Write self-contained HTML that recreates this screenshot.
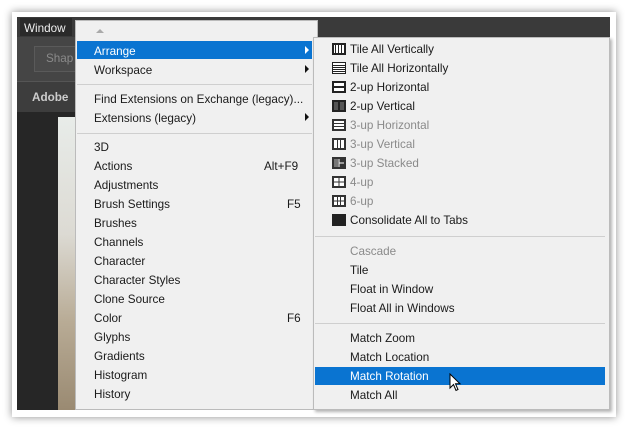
<!DOCTYPE html>
<html><head><style>
body{margin:0;width:625px;height:427px;background:#fff;position:relative;overflow:hidden;font-family:"Liberation Sans",sans-serif;font-size:11.7px;}
.a{position:absolute;}
.t{position:absolute;white-space:nowrap;color:#1a1a1a;line-height:19px;height:19px;margin-top:1px;}
.g{color:#8a8a8a;}
.sep{position:absolute;height:1px;background:#cfcfcf;}
svg.i{position:absolute;left:332px;shape-rendering:crispEdges;}
</style></head><body>
<div class="a" style="left:12px;top:12px;width:604px;height:405px;box-shadow:0 0 8px rgba(0,0,0,.45);"></div>
<div class="a" style="left:17px;top:17px;width:593px;height:393px;background:#262626;"></div>
<div class="a" style="left:17px;top:17px;width:593px;height:20px;background:#3a3a3a;"></div>
<div class="a" style="left:20px;top:18px;width:52px;height:18px;background:#2a2a2a;"></div>
<div class="t" style="left:24px;top:18px;color:#eee;">Window</div>
<div class="a" style="left:17px;top:37px;width:58px;height:44px;background:#454545;"></div>
<div class="a" style="left:34px;top:46px;width:45px;height:24px;border:1px solid #5a5a5a;background:#4a4a4a;"></div>
<div class="t" style="left:46px;top:48px;color:#8a8a8a;">Shap</div>
<div class="a" style="left:17px;top:81px;width:58px;height:30px;background:#3d3d3d;border-top:1px solid #555;"></div>
<div class="t" style="left:32px;top:87px;color:#ccc;font-weight:bold;">Adobe</div>
<div class="a" style="left:58px;top:117px;width:17px;height:293px;background:linear-gradient(#e8ece9,#dcdad3 40%,#b8ab95 70%,#9a8a72);"></div>
<div class="a" style="left:75px;top:20px;width:243px;height:390px;background:#f0f0f0;border:1px solid #bbb;box-sizing:border-box;"></div>
<div class="a" style="left:96px;top:29px;width:0;height:0;border-left:4px solid transparent;border-right:4px solid transparent;border-bottom:4px solid #aaa;"></div>
<div class="a" style="left:77px;top:41px;width:235px;height:18px;background:#0a74d1;"></div>
<div class="t" style="left:94px;top:41px;color:#fff;">Arrange</div>
<div class="a" style="left:305px;top:46px;border-top:4px solid transparent;border-bottom:4px solid transparent;border-left:4px solid #fff;"></div>
<div class="t" style="left:94px;top:60px;">Workspace</div>
<div class="a" style="left:305px;top:65px;border-top:4px solid transparent;border-bottom:4px solid transparent;border-left:4px solid #111;"></div>
<div class="sep" style="left:77px;top:84px;width:235px;"></div>
<div class="t" style="left:94px;top:89px;">Find Extensions on Exchange (legacy)...</div>
<div class="t" style="left:94px;top:108px;">Extensions (legacy)</div>
<div class="a" style="left:305px;top:113px;border-top:4px solid transparent;border-bottom:4px solid transparent;border-left:4px solid #111;"></div>
<div class="sep" style="left:77px;top:133px;width:235px;"></div>
<div class="t" style="left:94px;top:137px;">3D</div>
<div class="t" style="left:94px;top:156px;">Actions</div><div class="t" style="left:264px;top:156px;">Alt+F9</div>
<div class="t" style="left:94px;top:175px;">Adjustments</div>
<div class="t" style="left:94px;top:194px;">Brush Settings</div><div class="t" style="left:287px;top:194px;">F5</div>
<div class="t" style="left:94px;top:213px;">Brushes</div>
<div class="t" style="left:94px;top:232px;">Channels</div>
<div class="t" style="left:94px;top:251px;">Character</div>
<div class="t" style="left:94px;top:270px;">Character Styles</div>
<div class="t" style="left:94px;top:289px;">Clone Source</div>
<div class="t" style="left:94px;top:308px;">Color</div><div class="t" style="left:287px;top:308px;">F6</div>
<div class="t" style="left:94px;top:327px;">Glyphs</div>
<div class="t" style="left:94px;top:346px;">Gradients</div>
<div class="t" style="left:94px;top:365px;">Histogram</div>
<div class="t" style="left:94px;top:384px;">History</div>
<div class="a" style="left:313px;top:37px;width:297px;height:373px;background:#f0f0f0;border:1px solid #bbb;box-sizing:border-box;box-shadow:2px 2px 3px rgba(0,0,0,.3);"></div>
<svg class="i" style="top:43px" width="14" height="12"><rect x="0" y="0" width="14" height="12" fill="#222"/><rect x="2" y="2" width="10" height="8" fill="#fff"/><path d="M3.5 2v8M6.5 2v8M9.5 2v8" stroke="#222"/></svg>
<div class="t" style="left:350px;top:39px;">Tile All Vertically</div>
<svg class="i" style="top:62px" width="14" height="12"><rect x="0" y="0" width="14" height="12" fill="#222"/><rect x="1" y="1" width="12" height="10" fill="#fff"/><path d="M1 3.5h12M1 5.5h12M1 7.5h12M1 9.5h12" stroke="#222"/></svg>
<div class="t" style="left:350px;top:58px;">Tile All Horizontally</div>
<svg class="i" style="top:81px" width="14" height="12"><rect width="14" height="12" fill="#222"/><rect x="2" y="2" width="10" height="3" fill="#fff"/><rect x="2" y="7" width="10" height="3" fill="#fff"/><path d="M2 6h10" stroke="#222"/></svg>
<div class="t" style="left:350px;top:77px;">2-up Horizontal</div>
<svg class="i" style="top:100px" width="14" height="12"><rect width="14" height="12" fill="#222"/><rect x="2" y="2" width="4" height="8" fill="#555"/><rect x="8" y="2" width="4" height="8" fill="#555"/></svg>
<div class="t" style="left:350px;top:96px;">2-up Vertical</div>
<svg class="i" style="top:119px" width="14" height="12"><rect width="14" height="12" fill="#333"/><rect x="2" y="2" width="10" height="8" fill="#fff"/><path d="M2 4.5h10M2 7.5h10" stroke="#333"/></svg>
<div class="t g" style="left:350px;top:115px;">3-up Horizontal</div>
<svg class="i" style="top:138px" width="14" height="12"><rect width="14" height="12" fill="#333"/><rect x="2" y="2" width="10" height="8" fill="#fff"/><path d="M5.5 2v8M8.5 2v8" stroke="#333"/></svg>
<div class="t g" style="left:350px;top:134px;">3-up Vertical</div>
<svg class="i" style="top:157px" width="14" height="12"><rect width="14" height="12" fill="#333"/><rect x="2" y="2" width="4" height="8" fill="#777"/><path d="M7 2v8M7 6h5" stroke="#fff"/></svg>
<div class="t g" style="left:350px;top:153px;">3-up Stacked</div>
<svg class="i" style="top:176px" width="14" height="12"><rect width="14" height="12" fill="#333"/><rect x="2" y="2" width="10" height="8" fill="#fff"/><path d="M7 2v8M2 6h10" stroke="#333"/></svg>
<div class="t g" style="left:350px;top:172px;">4-up</div>
<svg class="i" style="top:195px" width="14" height="12"><rect width="14" height="12" fill="#333"/><rect x="2" y="2" width="10" height="8" fill="#fff"/><path d="M5.5 2v8M8.5 2v8M2 6h10" stroke="#333"/></svg>
<div class="t g" style="left:350px;top:191px;">6-up</div>
<svg class="i" style="top:214px" width="14" height="12"><rect width="14" height="12" fill="#222"/></svg>
<div class="t" style="left:350px;top:210px;">Consolidate All to Tabs</div>
<div class="sep" style="left:315px;top:236px;width:290px;"></div>
<div class="t g" style="left:350px;top:241px;">Cascade</div>
<div class="t" style="left:350px;top:260px;">Tile</div>
<div class="t" style="left:350px;top:279px;">Float in Window</div>
<div class="t" style="left:350px;top:298px;">Float All in Windows</div>
<div class="sep" style="left:315px;top:323px;width:290px;"></div>
<div class="t" style="left:350px;top:328px;">Match Zoom</div>
<div class="t" style="left:350px;top:347px;">Match Location</div>
<div class="a" style="left:315px;top:367px;width:290px;height:18px;background:#0a74d1;"></div>
<div class="t" style="left:350px;top:366px;color:#fff;">Match Rotation</div>
<div class="t" style="left:350px;top:385px;">Match All</div>
<svg class="a" style="left:449px;top:373px" width="14" height="20"><path d="M1 1 L1 15 L4.5 11.5 L7 17.5 L9 16.5 L6.5 10.8 L11 10.8 Z" fill="#fff" stroke="#000" stroke-width="1"/></svg>
</body></html>
